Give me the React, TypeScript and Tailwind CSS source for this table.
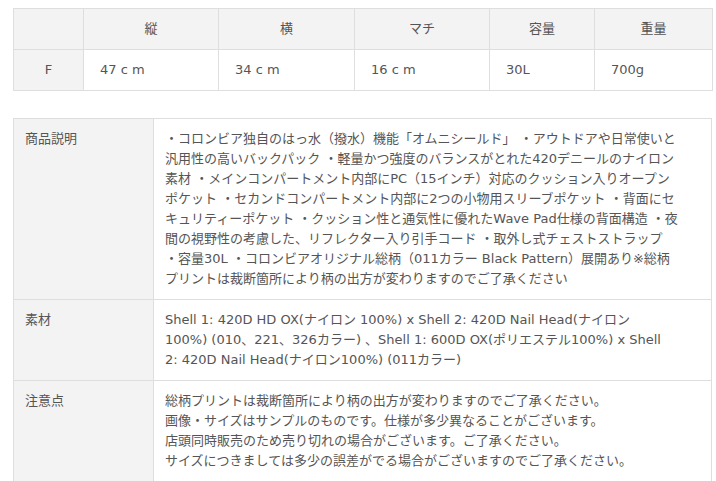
const font = { fontFamily: '"DejaVu Sans", "Noto Sans CJK JP", sans-serif' };

const sizeHead = ["", "縦", "横", "マチ", "容量", "重量"];
const sizeRow = ["F", "47 c m", "34 c m", "16 c m", "30L", "700g"];
const colW = ["w-[70px]", "w-[135px]", "w-[136px]", "w-[135px]", "w-[105px]", "w-[118px]"];

const description = [
  "・コロンビア独自のはっ水（撥水）機能「オムニシールド」 ・アウトドアや日常使いと",
  "汎用性の高いバックパック ・軽量かつ強度のバランスがとれた420デニールのナイロン",
  "素材 ・メインコンパートメント内部にPC（15インチ）対応のクッション入りオープン",
  "ポケット ・セカンドコンパートメント内部に2つの小物用スリーブポケット ・背面にセ",
  "キュリティーポケット ・クッション性と通気性に優れたWave Pad仕様の背面構造 ・夜",
  "間の視野性の考慮した、リフレクター入り引手コード ・取外し式チェストストラップ",
  "・容量30L ・コロンビアオリジナル総柄（011カラー Black Pattern）展開あり※総柄",
  "プリントは裁断箇所により柄の出方が変わりますのでご了承ください",
];

const material = [
  "Shell 1: 420D HD OX(ナイロン 100%) x Shell 2: 420D Nail Head(ナイロン",
  "100%) (010、221、326カラー) 、Shell 1: 600D OX(ポリエステル100%) x Shell",
  "2: 420D Nail Head(ナイロン100%) (011カラー)",
];

const notes = [
  "総柄プリントは裁断箇所により柄の出方が変わりますのでご了承ください。",
  "画像・サイズはサンプルのものです。仕様が多少異なることがございます。",
  "店頭同時販売のため売り切れの場合がございます。ご了承ください。",
  "サイズにつきましては多少の誤差がでる場合がございますのでご了承ください。",
];

function Lines({ lines }: { lines: string[] }) {
  return (
    <>
      {lines.map((l, i) => (
        <div key={i} className="whitespace-nowrap">
          {l}
        </div>
      ))}
    </>
  );
}

export default function App() {
  const specRows: { label: string; lines: string[] }[] = [
    { label: "商品説明", lines: description },
    { label: "素材", lines: material },
    { label: "注意点", lines: notes },
  ];

  return (
    <div className="min-h-[481px] bg-white pl-[13px] pt-[8px] text-[13px] leading-[20px] text-[#555]" style={font}>
      {/* size table */}
      <table className="w-[699px] table-fixed border-collapse">
        <thead>
          <tr className="bg-[#f3f3f3]">
            {sizeHead.map((h, i) => (
              <th key={i} className={`${colW[i]} h-[41px] border border-[#dedede] text-center font-normal`}>
                {h}
              </th>
            ))}
          </tr>
        </thead>
        <tbody>
          <tr>
            {sizeRow.map((c, i) => (
              <td
                key={i}
                className={
                  i === 0
                    ? "h-[41px] border border-[#dedede] bg-[#f3f3f3] text-center"
                    : "h-[41px] border border-[#dedede] px-4"
                }
              >
                {c}
              </td>
            ))}
          </tr>
        </tbody>
      </table>

      {/* spec table */}
      <table className="mt-[27px] w-[699px] table-fixed border-collapse">
        <tbody>
          {specRows.map((r) => (
            <tr key={r.label}>
              <td className="w-[140px] border border-[#dedede] bg-[#f3f3f3] px-[11px] pt-[10px] pb-[10px] align-top">
                {r.label}
              </td>
              <td className="border border-[#dedede] px-[11px] pt-[10px] pb-[10px] align-top">
                <Lines lines={r.lines} />
              </td>
            </tr>
          ))}
        </tbody>
      </table>
    </div>
  );
}
